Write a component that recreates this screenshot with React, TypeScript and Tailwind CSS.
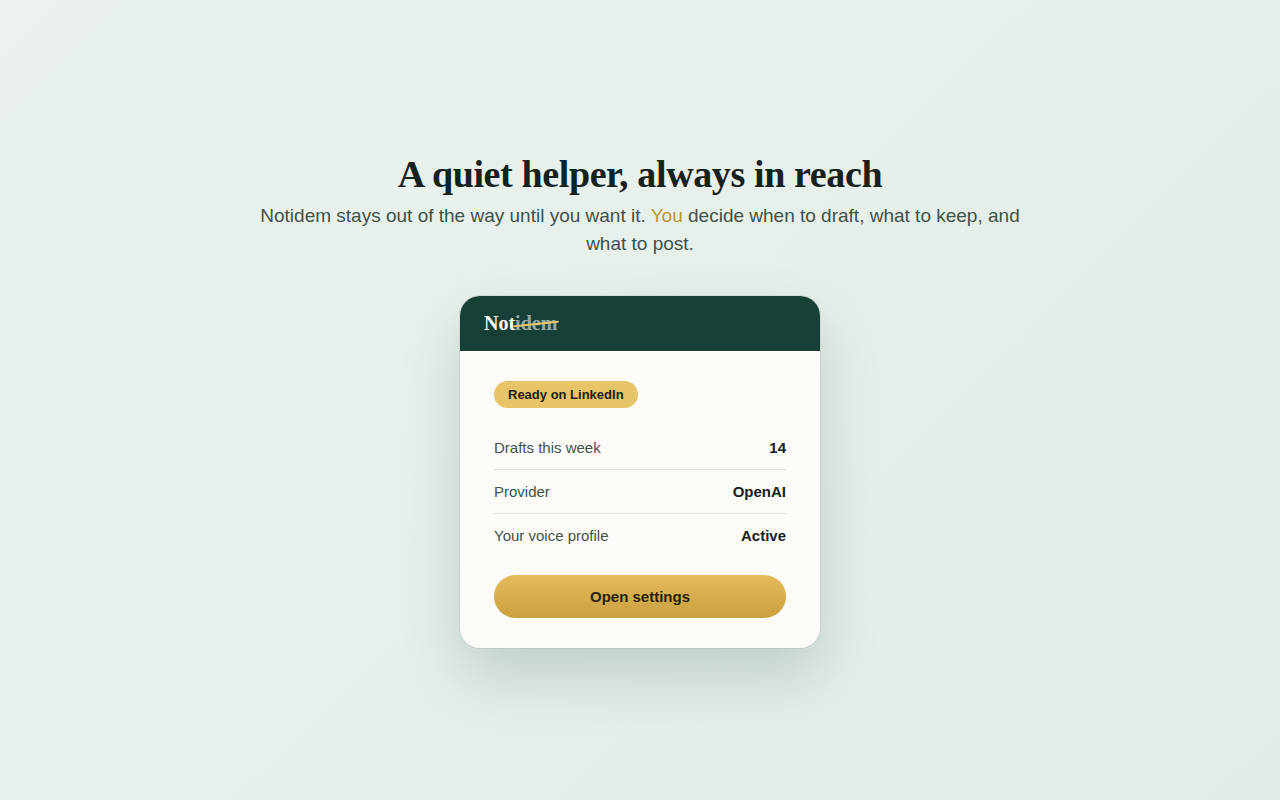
const rows = [
  { label: 'Drafts this week', value: '14' },
  { label: 'Provider', value: 'OpenAI' },
  { label: 'Your voice profile', value: 'Active' },
]

export default function App() {
  return (
    <div className="min-h-screen pb-px flex flex-col items-center justify-center bg-[linear-gradient(135deg,#ecf3ef_0%,#e2ebe6_100%)] font-['Liberation_Sans',Arial,sans-serif]">
      <h1 className="font-['Liberation_Serif',serif] font-bold text-[38px] leading-[46px] tracking-[-0.38px] text-[#16211d]">
        A quiet helper, always in reach
      </h1>
      <p className="mt-[5px] w-[780px] text-center text-[19px] leading-[28px] text-[#41524c]">
        Notidem stays out of the way until you want it. <span className="text-[#b8962f]">You</span> decide when to draft, what to keep, and what to post.
      </p>

      <div className="mt-[38px] w-[360px] rounded-[20px] overflow-hidden bg-[#fdfbf7] shadow-[0_0_0_1px_rgba(22,60,50,0.08),0_28px_60px_rgba(22,60,50,0.18)]">
        <div className="h-[55px] pb-[2px] flex items-center px-6 bg-[#163f35]">
          <div className="relative font-['Liberation_Serif',serif] font-bold text-[20px] text-white">
            Not<span className="opacity-55">idem</span>
            <span className="absolute left-[29px] top-[15px] h-[2px] w-[46px] -rotate-6 rounded-full bg-[#e8c468]" />
          </div>
        </div>
        <div className="pt-[30px] px-[34px] pb-[30px]">
          <span className="block w-fit rounded-full bg-[#e8c468] px-[14px] py-[6px] text-[13px] leading-[15px] font-bold text-[#1f1b10]">
            Ready on LinkedIn
          </span>
          <div className="mt-[18px]">
            {rows.map((row, i) => (
              <div
                key={row.label}
                className={`flex items-center justify-between h-[44px] text-[15px] ${i < rows.length - 1 ? 'pt-[2px] border-b border-[#e5e5df]' : ''}`}
              >
                <span className="text-[#41524c]">{row.label}</span>
                <span className="font-bold text-[#16211d]">{row.value}</span>
              </div>
            ))}
          </div>
          <button className="block mt-[17px] w-full h-[43px] pt-[2px] rounded-full bg-[linear-gradient(180deg,#e4bc5e,#c9a03f)] text-[15px] font-bold text-[#2a1f08]">
            Open settings
          </button>
        </div>
      </div>
    </div>
  )
}
